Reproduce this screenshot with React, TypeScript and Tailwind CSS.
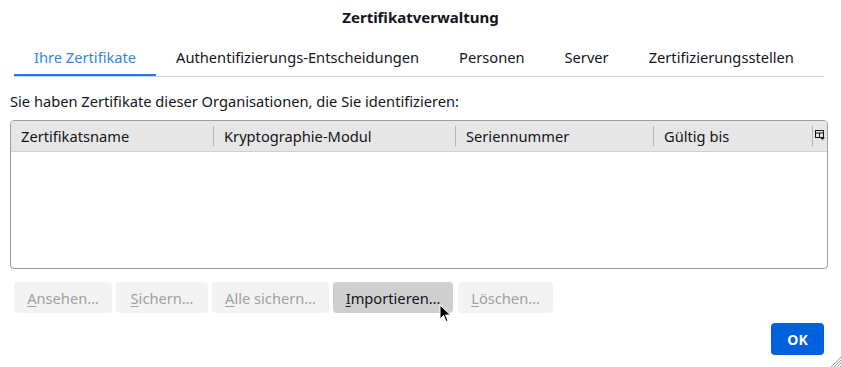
const font = { fontFamily: '"Noto Sans", "Open Sans", sans-serif' };

const tabs = [
  "Ihre Zertifikate",
  "Authentifizierungs-Entscheidungen",
  "Personen",
  "Server",
  "Zertifizierungsstellen",
];

const columns = [
  { label: "Zertifikatsname", w: "w-[202px]" },
  { label: "Kryptographie-Modul", w: "w-[241px]" },
  { label: "Seriennummer", w: "w-[197px]" },
  { label: "Gültig bis", w: "w-[158px]" },
];

const buttons = [
  { key: "A", rest: "nsehen…", w: "w-[98px]", enabled: false },
  { key: "S", rest: "ichern…", w: "w-[92px]", enabled: false },
  { key: "A", rest: "lle sichern…", w: "w-[117px]", enabled: false },
  { key: "I", rest: "mportieren…", w: "w-[120px]", enabled: true },
  { key: "L", rest: "öschen…", w: "w-[95px]", enabled: false },
];

function ColumnPicker() {
  return (
    <svg width="10" height="10" viewBox="0 0 10 10" className="text-[#15141a]">
      <rect x="0.5" y="0.5" width="8" height="7" fill="none" stroke="currentColor" />
      <line x1="0.5" y1="3" x2="8.5" y2="3" stroke="currentColor" />
      <line x1="4.5" y1="3" x2="4.5" y2="7.5" stroke="currentColor" />
      <path d="M5 7.5 L10 7.5 L7.5 10 Z" fill="currentColor" />
    </svg>
  );
}

export default function App() {
  return (
    <div
      className="relative w-[841px] h-[367px] bg-white text-[#15141a] text-[14.67px] overflow-hidden"
      style={font}
    >
      <div className="pt-[6px] leading-[22px] text-center font-bold text-[15px]">
        Zertifikatverwaltung
      </div>

      <div className="mt-[12px] ml-[14px] w-[810px] flex border-b border-[#d3d3d6]">
        {tabs.map((t, i) => (
          <div
            key={t}
            className={
              "h-[36px] px-[20px] shrink-0 whitespace-nowrap flex items-center border-b-2 " +
              (i === 0
                ? "border-[#1b7ee9] text-[#2d87ea]"
                : "border-transparent")
            }
          >
            {t}
          </div>
        ))}
      </div>

      <div className="mt-[13px] ml-[10px] leading-[22px]">
        Sie haben Zertifikate dieser Organisationen, die Sie identifizieren:
      </div>

      <div className="mt-[8px] ml-[10px] w-[818px] h-[149px] border border-[#9e9e9e] rounded-[4px] overflow-hidden">
        <div className="h-[31px] bg-[#e6e6e6] border-b border-[#cfcfcf] flex items-center">
          {columns.map((c, i) => (
            <div key={c.label} className="flex items-center h-full">
              {i > 0 && <div className="w-px h-[20px] bg-[#b5b5b5]" />}
              <div className={c.w + " pl-[10px] leading-[22px]"}>{c.label}</div>
            </div>
          ))}
          <div className="w-px h-[20px] bg-[#b5b5b5]" />
          <div className="flex-1 flex items-center justify-center pb-[2px]">
            <ColumnPicker />
          </div>
        </div>
      </div>

      <div className="mt-[13px] ml-[14px] flex gap-[4px]">
        {buttons.map((b, i) => (
          <div
            key={i}
            className={
              b.w +
              " h-[31px] rounded-[4px] flex items-center justify-center whitespace-nowrap " +
              (b.enabled
                ? "bg-[#cfcfcf] text-[#15141a]"
                : "bg-[#f3f3f3] text-[#a0a0a0]") +
              (i === 4 ? " ml-[1px]" : "")
            }
          >
            <span>
              <span className="underline underline-offset-2">{b.key}</span>
              {b.rest}
            </span>
          </div>
        ))}
      </div>

      <div className="mt-[10px] mr-[17px] flex justify-end">
        <div className="w-[53px] h-[32px] rounded-[4px] bg-[#0061df] text-white font-bold text-[14px] flex items-center justify-center">
          OK
        </div>
      </div>

      {/* mouse cursor */}
      <svg
        className="absolute left-[439px] top-[304px]"
        width="13"
        height="20"
        viewBox="0 0 13 20"
      >
        <path
          d="M1 1 L1 15 L4.5 11.5 L7 17.5 L9 16.6 L6.6 11 L11.5 11 Z"
          fill="#000"
          stroke="#fff"
          strokeWidth="1"
          strokeLinejoin="round"
        />
      </svg>

      {/* resize grip */}
      <svg
        className="absolute right-0 bottom-0"
        width="13"
        height="13"
        viewBox="0 0 13 13"
      >
        <line x1="3" y1="13" x2="13" y2="3" stroke="#9a9a9a" strokeWidth="1" />
        <line x1="6" y1="13" x2="13" y2="6" stroke="#9a9a9a" strokeWidth="1" />
        <line x1="9" y1="13" x2="13" y2="9" stroke="#9a9a9a" strokeWidth="1" />
        <line x1="12" y1="13" x2="13" y2="12" stroke="#9a9a9a" strokeWidth="1" />
      </svg>
    </div>
  );
}
